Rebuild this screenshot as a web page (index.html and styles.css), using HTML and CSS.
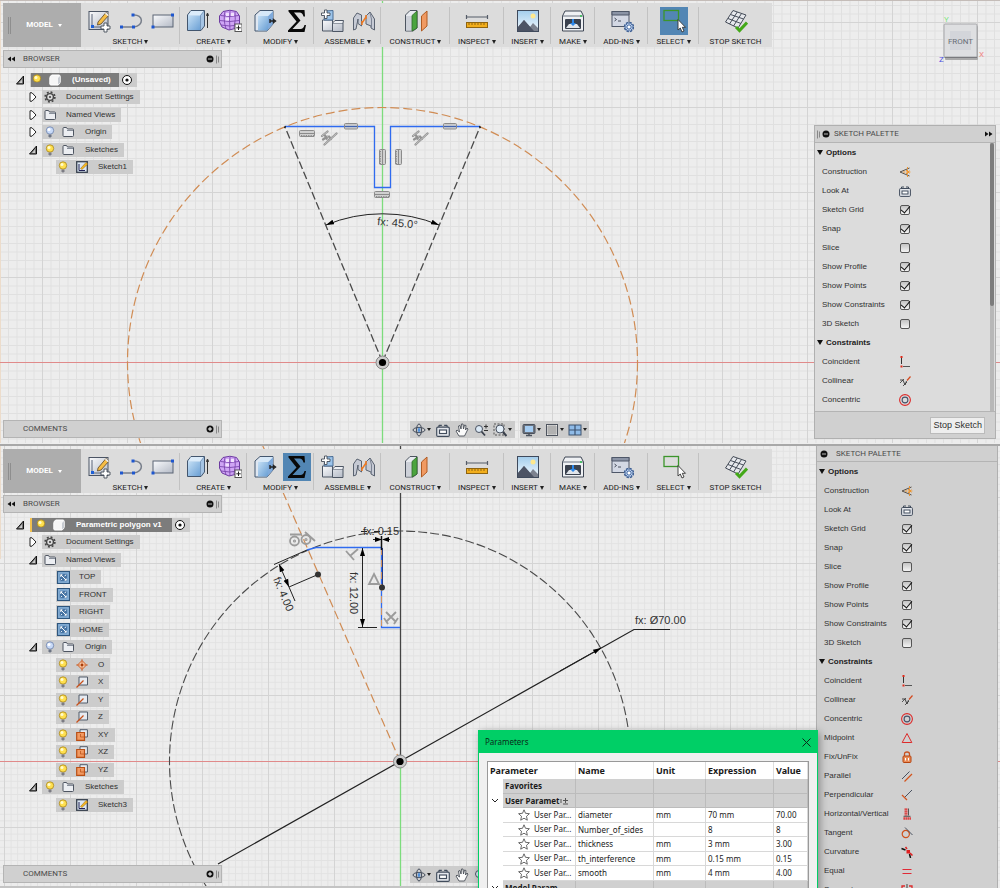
FILE: index.html
```html
<!DOCTYPE html>
<html lang="en">
<head>
<meta charset="utf-8">
<title>Sketch workspace</title>
<link rel="stylesheet" href="styles.css">
</head>
<body>
<svg class="sprite" width="0" height="0" aria-hidden="true">
  <defs>
    <linearGradient id="steel" x1="0" y1="0" x2="1" y2="1"><stop offset="0" stop-color="#fafbfd"/><stop offset="1" stop-color="#b4bac6"/></linearGradient>
    <linearGradient id="blue" x1="0" y1="0" x2="1" y2="1"><stop offset="0" stop-color="#c4dff5"/><stop offset="1" stop-color="#6a9fd4"/></linearGradient>
    <linearGradient id="sky" x1="0" y1="0" x2="0" y2="1"><stop offset="0" stop-color="#a3cdec"/><stop offset="1" stop-color="#f4faff"/></linearGradient>
    <pattern id="minor1" x="382" y="362" width="8.5" height="8.5" patternUnits="userSpaceOnUse"><path d="M0 .5H8.5M.5 0V8.5" stroke="#e0e0e0" fill="none"/></pattern>
    <pattern id="major1" x="382" y="362" width="85" height="85" patternUnits="userSpaceOnUse"><path d="M0 .5H85M.5 0V85" stroke="#d4d4d4" fill="none"/></pattern>
    <pattern id="minor2" x="400" y="317" width="6.6" height="6.6" patternUnits="userSpaceOnUse"><path d="M0 .5H6.6M.5 0V6.6" stroke="#e2e2e2" fill="none"/></pattern>
    <pattern id="major2" x="400" y="317" width="66" height="66" patternUnits="userSpaceOnUse"><path d="M0 .5H66M.5 0V66" stroke="#d4d4d4" fill="none"/></pattern>
    <marker id="arrow" viewBox="0 0 8 6" refX="8" refY="3" markerWidth="8" markerHeight="6" markerUnits="userSpaceOnUse" orient="auto-start-reverse"><path d="M0 .5L8 3L0 5.500z"/></marker>
  </defs>
  <symbol id="sketch" viewBox="0 0 24 24"><rect x="2" y="2.500" width="19" height="18" fill="url(#steel)" stroke="#4b5464"/><path d="M5 5V18H18" fill="none" stroke="#5a6478"/><rect x="4" y="16" width="3" height="3" fill="#1d5fd6"/><path d="M11 13L19 3.500L22 6L14 15L10.500 16z" fill="#f6bd45" stroke="#5b4422" stroke-width=".8"/><path d="M19 3.500L22 6L21 7.200L18 4.700z" fill="#e8eaf0"/><path d="M17 14h3v3h3v3h-3v3h-3v-3h-3v-3h3z" fill="#fff" stroke="#444c58" stroke-width=".9"/></symbol>
  <symbol id="curve" viewBox="0 0 24 24"><path d="M3 18H14M14 6C25 5 25 17 15 18" fill="none" stroke="#777e8a" stroke-width="1.500"/><g fill="#1e57cf"><rect x="1" y="16.500" width="3" height="3"/><rect x="13" y="16.500" width="3" height="3"/><rect x="12.500" y="4.500" width="3" height="3"/></g></symbol>
  <symbol id="rect" viewBox="0 0 24 24"><rect x="2" y="6" width="20" height="12" fill="url(#steel)" stroke="#5b6474"/><g fill="#1e57cf"><rect x=".5" y="16.500" width="3" height="3"/><rect x="20" y="4.500" width="3" height="3"/></g></symbol>
  <symbol id="extrude" viewBox="0 0 24 24"><path d="M1.500 6L5 1.500H18.500V17L15 21.500H1.500z" fill="#a5c4e4" stroke="#43566e"/><path d="M2 6.500H14.500V21H2z" fill="url(#blue)"/><path d="M2 6.500H14.500L18 2H5z" fill="#dcecfa"/><path d="M14.500 6.500V21M14.500 6.500L18 2" stroke="#6d8db0" stroke-width=".8"/><path d="M21.500 19V5M20.500 6.500L21.500 4L22.500 6.500z" stroke="#333" fill="#333"/></symbol>
  <symbol id="form" viewBox="0 0 24 24"><path d="M5 2.500Q12 0 18.500 2.500L21.500 7V15L19 19L11 21L4 18L1.500 13V7z" fill="#cfa5f5" stroke="#6c39a0"/><path d="M7 2.500Q5 10 8 20M12 2Q11 10 12 21M17 3Q18 10 16 19M2.500 6.500Q12 8.500 21 6.500M1.500 11.500Q12 13.500 21.500 11.500M3 16Q12 18 20 16" fill="none" stroke="#7a46ae" stroke-width=".9"/><path d="M8 4H11V7H8zM13 4H16V7H13zM7.500 8.500H11V11.500H7.500z" fill="#f0e0fd"/><rect x="17" y="15" width="7" height="7.500" fill="#fff" stroke="#555"/><path d="M20.500 16.500V21M18.300 18.800H22.700" stroke="#222"/></symbol>
  <symbol id="presspull" viewBox="0 0 24 24"><path d="M2 6L7 1.500H20V15L14 22H2z" fill="#dfe7f1" stroke="#43566e"/><path d="M5 7H15V21.500H5z" fill="url(#blue)"/><path d="M15 7L20 2V15L15 20.500z" fill="#7faadb"/><path d="M5 7L9 2H20L15 7z" fill="#d6e8f8"/><path d="M17 10V14M17 12H20M20.500 10.500L22.500 12L20.500 13.500z" stroke="#222" fill="#222" stroke-width="1.400"/></symbol>
  <symbol id="sigma" viewBox="0 0 24 24"><path d="M3.500 1H19.500L20 7.500H18.500Q17.500 3.500 14.500 3.500H9L15.500 11.500L7.500 20H15.500Q18.500 20 19.500 16H21L19.500 23H3V21.500L11.500 12.500L3.500 2.500z" fill="#080808"/></symbol>
  <symbol id="component" viewBox="0 0 24 24"><path d="M2.500 11V22H12.500V11zM12.500 14H23V22.500H12.500z" fill="url(#steel)" stroke="#4d5664"/><path d="M5 2L13 1.500V11H4z" fill="#9cc4ea" stroke="#4a6d94"/><path d="M12.500 14L15 11.500H23.500L23 14" fill="#eef0f4" stroke="#4d5664"/><path d="M4.500 1h2.500v3h3v2.500h-3v3h-2.500v-3h-3v-2.500h3z" fill="#fff" stroke="#444c58" stroke-width=".9"/></symbol>
  <symbol id="joint" viewBox="0 0 24 24"><path d="M1.500 9L5 4L9.500 6V17L6 14.500V10L4 20L1.500 21z" fill="#c6cad4" stroke="#596270"/><path d="M14 7L18 3L22.500 10V21L19 19V17L14 15z" fill="#c6cad4" stroke="#596270"/><path d="M18 4L19.500 10V19" fill="none" stroke="#7c8494"/><path d="M10 14L14 8M10 12V16M14 6V10" stroke="#ef7a22" stroke-width="1.500"/></symbol>
  <symbol id="construct" viewBox="0 0 24 24"><path d="M1.500 6L6 1.500H13V19L9 22H1.500z" fill="#e7eaef" stroke="#4d5560"/><path d="M2 7H8V21.500H2z" fill="#cdd1d9"/><path d="M8 6.500L13 2V19L8 22z" fill="#4ba43e" stroke="#2e6b28" stroke-width=".8"/><path d="M17.500 7L23 2V17L17.500 22z" fill="#f09a62" stroke="#b05b22"/></symbol>
  <symbol id="ruler" viewBox="0 0 24 24"><path d="M1.500 8H22.500M1.500 6V10M22.500 6V10" stroke="#555c68" stroke-width="1.200"/><rect x="1.500" y="13.500" width="21" height="5" fill="#f2ae1c" stroke="#8f6410"/><path d="M4 14V16M7 14V16M10 14V16M13 14V16M16 14V16M19 14V16" stroke="#8f6410"/></symbol>
  <symbol id="picture" viewBox="0 0 24 24"><rect x="1.500" y="1.500" width="21" height="21" fill="url(#sky)" stroke="#3f4a5c"/><circle cx="17" cy="7" r="2.500" fill="#ffe98e"/><path d="M2 18L8 11L14 18L17 14L22 19V22H2z" fill="#7c828f"/><path d="M2 18L8 11L18 22H2z" fill="#4c5364"/></symbol>
  <symbol id="printer" viewBox="0 0 24 24"><path d="M1.500 7L4 2H20L22.500 7V22H1.500z" fill="#eff1f4" stroke="#3e4654"/><path d="M1.500 7H22.500" stroke="#6c7482"/><rect x="4" y="10" width="16" height="10" rx="1" fill="#3b424f"/><path d="M5 19L8 15H16L19 19z" fill="#e1e5ea"/><path d="M11 10H13V14H15L12 17L9 14H11z" fill="#2d87e8"/><circle cx="20" cy="7" r="1" fill="#2fc04d"/></symbol>
  <symbol id="addins" viewBox="0 0 24 24"><rect x="2" y="2.500" width="17" height="15" fill="#d3d8e4" stroke="#4e5768"/><path d="M2 2.500H19V6H2z" fill="#8b94a6" stroke="#4e5768"/><path d="M4.500 9L6.500 10.500L4.500 12M8 12H11" fill="none" stroke="#39414f" stroke-width=".9"/><circle cx="19" cy="18" r="4.500" fill="#b8cdee" stroke="#3e5f92" stroke-width="1.500" stroke-dasharray="2.500 1"/><path d="M19 14V22M15 18H23M16 15L22 21M22 15L16 21" stroke="#3e5f92" stroke-width=".8"/><circle cx="19" cy="18" r="1.300" fill="#fff"/></symbol>
  <symbol id="select" viewBox="0 0 28 28"><rect x="4" y="3.500" width="14.500" height="10" fill="none" stroke="#3c952c" stroke-width="1.300"/><path d="M18 12.500V23L20.300 21L22 25L24 24L22.300 20.300H25.500z" fill="#fff" stroke="#333" stroke-width=".9"/></symbol>
  <symbol id="stop" viewBox="0 0 24 24"><path d="M9 1.500L22 6L14 19L1.500 13z" fill="#e6e8ec" stroke="#454c58"/><path d="M6.500 5.500L19.500 10M4 9.500L17 14.500M13.300 3L5.500 15M17.500 4.500L9.500 17" fill="none" stroke="#454c58" stroke-width="1"/><path d="M12 18L15.500 21.500L23 13.500" fill="none" stroke="#43a818" stroke-width="3"/></symbol>

  <symbol id="bulb" viewBox="0 0 12 12"><circle cx="6" cy="4.500" r="3.700" fill="#ffe04f" stroke="#a88418" stroke-width=".8"/><circle cx="5" cy="3.500" r="1.500" fill="#fffbd0"/><path d="M4.500 8.500H7.500V10.500L6.500 11.500H5.500L4.500 10.500z" fill="#7c7c84"/></symbol>
  <symbol id="bulb-off" viewBox="0 0 12 12"><circle cx="6" cy="4.500" r="3.700" fill="#c8daf8" stroke="#6a7fa8" stroke-width=".8"/><circle cx="5" cy="3.500" r="1.500" fill="#fff"/><path d="M4.500 8.500H7.500V10.500L6.500 11.500H5.500L4.500 10.500z" fill="#6c7484"/></symbol>
  <symbol id="folder" viewBox="0 0 12 12"><path d="M1 2.500Q1 1.500 2 1.500H4.500L5.500 3H10.500Q11.500 3 11.500 4V9.500Q11.500 10.500 10.500 10.500H2Q1 10.500 1 9.500z" fill="#eceef2" stroke="#4e5561"/><path d="M5 4.500H11" stroke="#6e7683" stroke-width=".8"/></symbol>
  <symbol id="gear" viewBox="0 0 12 12"><circle cx="6" cy="6" r="4.900" fill="none" stroke="#444" stroke-width="1.600" stroke-dasharray="1.900 1.950"/><circle cx="6" cy="6" r="3.400" fill="#ddd" stroke="#444" stroke-width="1.400"/><circle cx="6" cy="6" r="1.100" fill="#444"/></symbol>
  <symbol id="body" viewBox="0 0 12 12"><path d="M.8 4Q1 1.500 3 1H10Q11.200 1 11.200 2.500V8Q11 10 9 11H2Q.8 11 .8 10z" fill="#f6f6f6" stroke="#fff"/><path d="M9 4L11 2V8.500L9 10.500z" fill="#c8ccd2"/></symbol>
  <symbol id="sk" viewBox="0 0 12 12"><rect x=".7" y=".7" width="10.600" height="10.600" fill="#dbe6f3" stroke="#39424f" stroke-width="1.300"/><path d="M3 3V9.500H9" fill="none" stroke="#225" stroke-width="1"/><path d="M4.500 7.500L10 1.500L11.800 3L6 8.500z" fill="#f8b822" stroke="#8d6210" stroke-width=".5"/></symbol>
  <symbol id="view" viewBox="0 0 12 12"><rect x=".5" y=".5" width="11" height="11" fill="#8ab3da" stroke="#2e567e"/><rect x="2.500" y="2.500" width="7" height="7" fill="#4573a3"/><path d="M3.500 3.500L8.500 8.500M3.500 3.500V5.500M3.500 3.500H5M8.500 8.500H7M8.500 8.500V7M7 4.500L8.500 3.500M4.500 7.500L3.500 8.500" stroke="#fff" fill="none" stroke-width=".9"/></symbol>
  <symbol id="point" viewBox="0 0 12 12"><path d="M6 1.500L10.500 6L6 10.500L1.500 6z" fill="#f6c7a5" stroke="#c8571c" stroke-width=".9"/><path d="M6 0V12M0 6H12" stroke="#c8571c" stroke-width=".7"/><circle cx="6" cy="6" r="1.200" fill="#a53c08"/></symbol>
  <symbol id="axis" viewBox="0 0 12 12"><path d="M3 1H11.500V9H3z" fill="#e6eaf0" stroke="#525c6a"/><path d="M.5 11.500L7.500 4.500" stroke="#c8501a" stroke-width="1.300"/></symbol>
  <symbol id="plane" viewBox="0 0 12 12"><path d="M4 .7H11.400V8H4z" fill="#e6eaf0" stroke="#525c6a"/><path d="M.7 3.500H8.500V11.300H.7z" fill="#f29a62" stroke="#b94e14" stroke-width="1.200"/><path d="M4.500 5V8H8" stroke="#b94e14" fill="none" stroke-width=".7"/></symbol>
  <symbol id="shut" viewBox="0 0 8 10"><path d="M1 .8H3L7 5L3 9.200H1z" fill="#fff" stroke="#222"/></symbol>
  <symbol id="open" viewBox="0 0 8 10"><path d="M7.500 1V9H.5z" fill="#777" stroke="#111"/><path d="M6 4.500V8H3z" fill="#ccc"/></symbol>
  <symbol id="target" viewBox="0 0 12 12"><circle cx="6" cy="6" r="4.500" fill="#fff" stroke="#111"/><circle cx="6" cy="6" r="1.600" fill="#111"/></symbol>
  <symbol id="minus" viewBox="0 0 8 8"><circle cx="4" cy="4" r="3.500" fill="#111"/><path d="M2 4H6" stroke="#bbb"/></symbol>
  <symbol id="plus" viewBox="0 0 8 8"><circle cx="4" cy="4" r="3.500" fill="#111"/><path d="M2 4H6M4 2V6" stroke="#fff"/></symbol>
  <symbol id="back" viewBox="0 0 8 6"><path d="M4 .5V5.500L.5 3zM8 .5V5.500L4.500 3z" fill="#111"/></symbol>
  <symbol id="fwd" viewBox="0 0 8 6"><path d="M0 .5V5.500L3.500 3zM4 .5V5.500L7.500 3z" fill="#111"/></symbol>
  <symbol id="grip" viewBox="0 0 4 8"><path d="M.5 0V8M2.500 1V7" stroke="#888"/></symbol>

  <symbol id="c-constr" viewBox="0 0 12 12"><path d="M10.500 2L1 6L10.500 10" fill="none" stroke="#5a5148" stroke-width="1"/><path d="M4 6H12M8.500 1V11M7 4L11 8M7 8L11 4" stroke="#f09020" stroke-width=".9" stroke-dasharray="2 .7"/></symbol>
  <symbol id="c-look" viewBox="0 0 12 12"><rect x=".6" y="3.500" width="10.800" height="7.900" rx="1" fill="#e4e7ec" stroke="#414c5c"/><rect x="3" y="6" width="6" height="3" fill="#fff" stroke="#414c5c"/><path d="M2.500 3.500V2M9.500 3.500V2M2.500 2H5M7 2H9.500" stroke="#414c5c"/></symbol>
  <symbol id="c-coin" viewBox="0 0 12 12"><path d="M2.500 2V8" stroke="#333"/><path d="M4 10.500H11" stroke="#555"/><path d="M1.500 0H3.500V2H1.500zM1.500 9.500H3.500V11.500H1.500z" fill="#e02818"/></symbol>
  <symbol id="c-coll" viewBox="0 0 12 12"><path d="M1 5H4L6 10L7.500 6" fill="none" stroke="#222" stroke-width=".8"/><path d="M1 8L5 4M4 11L8 7" stroke="#333" stroke-width=".8"/><path d="M8 5.500L11.500 1.500" stroke="#d4481c" stroke-width="1.200"/></symbol>
  <symbol id="c-conc" viewBox="0 0 12 12"><circle cx="6" cy="6" r="5.400" fill="none" stroke="#dd2a2a" stroke-width="1.100"/><circle cx="6" cy="6" r="2.900" fill="none" stroke="#46536a" stroke-width="1.100"/></symbol>
  <symbol id="c-mid" viewBox="0 0 12 12"><path d="M6 1.500L10.800 10.500H1.200z" fill="none" stroke="#dd2a2a"/></symbol>
  <symbol id="c-fix" viewBox="0 0 12 12"><path d="M3.500 5.500V3Q3.500 1 6 1T8.500 3V5.500" fill="none" stroke="#c8501e" stroke-width="1.300"/><rect x="2" y="5" width="8" height="6.500" rx="1" fill="#e98c58" stroke="#b5430f"/><path d="M4.500 7V9.500M7.500 7V9.500" stroke="#fff"/></symbol>
  <symbol id="c-par" viewBox="0 0 12 12"><path d="M1 9L8.500 1.500" stroke="#4a5260"/><path d="M3.500 11.500L11 4" stroke="#d4541c" stroke-width="1.200"/></symbol>
  <symbol id="c-perp" viewBox="0 0 12 12"><path d="M3.500 8.500L11 1" stroke="#4a5260"/><path d="M1 6L6 11" stroke="#d4541c" stroke-width="1.200"/></symbol>
  <symbol id="c-hv" viewBox="0 0 12 12"><path d="M5 .5V7.500" stroke="#e02020" stroke-width="3" stroke-dasharray="1.300 .7"/><path d="M7.500 .5V7.500M2.500 8.300H9.500" stroke="#555"/><path d="M2.500 10.500H10" stroke="#e02020" stroke-width="2.500" stroke-dasharray="1.300 .7"/></symbol>
  <symbol id="c-tan" viewBox="0 0 12 12"><circle cx="4.800" cy="7" r="3.600" fill="none" stroke="#cf521c" stroke-width="1.200"/><path d="M4 .5L11.500 8" stroke="#4a5260"/></symbol>
  <symbol id="c-curv" viewBox="0 0 12 12"><path d="M.5 2.500L4.500 4M8.500 8L9.500 12" stroke="#111" stroke-width="1.500"/><path d="M4.500 1L6 3M9 7L11.500 9.500" stroke="#e02020" stroke-width="1.500"/><rect x="5.500" y="4" width="3.500" height="3.500" fill="#e02020"/></symbol>
  <symbol id="c-eq" viewBox="0 0 12 12"><path d="M1.500 4.500H10.500M1.500 8.500H10.500" stroke="#e02a36"/></symbol>
  <symbol id="c-sym" viewBox="0 0 12 12"><path d="M6 0V12" stroke="#444"/><path d="M4 2H1V8H4M8 2H11V8H8" fill="none" stroke="#dd2a2a" stroke-width="1.300"/></symbol>

  <symbol id="n-orbit" viewBox="0 0 14 14"><ellipse cx="7" cy="7" rx="6" ry="2.500" fill="none" stroke="#424b5a"/><ellipse cx="7" cy="7" rx="2.500" ry="6" fill="none" stroke="#424b5a"/><path d="M7 4L8.500 7L7 10L5.500 7z" fill="#4f90dc"/></symbol>
  <symbol id="n-pan" viewBox="0 0 14 14"><path d="M4 13L1 8L2 7L4.500 9L3.500 3L5 2.500L6 6L6.500 1L8 1L8.500 6L9.500 2L11 2.500L10.500 7L12 5L13 6L11 10L9.500 13z" fill="#fbfbfb" stroke="#4a4f58" stroke-width=".9"/></symbol>
  <symbol id="n-zoom" viewBox="0 0 14 14"><circle cx="5" cy="6" r="3.500" fill="#dbe9f6" stroke="#4a5260"/><path d="M7.500 8.500L11 12.500" stroke="#3a404c" stroke-width="1.800"/><path d="M12 1.500V5.500M10 3.500H14M10 7.500H14" stroke="#333"/></symbol>
  <symbol id="n-fit" viewBox="0 0 14 14"><rect x="1" y="1" width="10" height="11" fill="none" stroke="#555" stroke-dasharray="2 1.500"/><circle cx="7" cy="6" r="4" fill="#e3eef8" stroke="#4a5260"/><path d="M10 9L13.500 13" stroke="#3a404c" stroke-width="2"/></symbol>
  <symbol id="n-disp" viewBox="0 0 14 14"><rect x="1" y="1.500" width="12" height="9" rx="1" fill="#6d747f" stroke="#4a515d"/><rect x="3" y="3" width="8" height="6" fill="#a4ccf2"/><path d="M4 12.500H10M7 10V12" stroke="#4a515d" stroke-width="1.500"/></symbol>
  <symbol id="n-grid" viewBox="0 0 14 14"><rect x="1.500" y="1.500" width="11" height="11" fill="#ececec" stroke="#4e545e"/><path d="M4 2V12M6 2V12M8 2V12M10 2V12M2 4H12M2 6H12M2 8H12M2 10H12" stroke="#888" stroke-width=".7"/></symbol>
  <symbol id="n-views" viewBox="0 0 14 14"><rect x="1" y="2" width="12" height="10" fill="#8fbbe8" stroke="#3d526e"/><path d="M7 2V12M1 7H13" stroke="#3d526e" stroke-width="1.200"/></symbol>

  <symbol id="g-bar" viewBox="0 0 14 7"><rect x=".5" y=".5" width="13" height="5.500" rx="1" fill="#bbb" fill-opacity=".6" stroke="#8b8b8b"/><path d="M1 3.500H13" stroke="#3f62b0"/></symbol>
  <symbol id="g-comb" viewBox="0 0 16 8"><rect x=".5" y=".5" width="15" height="6" rx="1" fill="#d0d0d0" stroke="#8b8b8b"/><path d="M1 3.500H15" stroke="#8b8b8b"/><path d="M2 6H15" stroke="#8b8b8b" stroke-width="2" stroke-dasharray="1.200 1.200"/></symbol>
  <symbol id="g-coll" viewBox="0 0 18 16"><g fill="none" stroke="#929292" stroke-width="2.200" stroke-linecap="round"><path d="M2 6L7.500 1.500M4 4.500L7 8M4.500 14.500L16.500 3.500M3 9.500L6 7.500M9 6.500L11 9"/><circle cx="7.500" cy="8" r="2" stroke-width="1"/></g><path d="M4.500 14.500L16.500 3.500M2 6L7.500 1.500" stroke="#ccc" stroke-width=".8"/></symbol>
</svg>

<main class="screens">
<section class="viewport first" aria-label="Unsaved design">
  <svg class="canvas" role="img" aria-label="Notched segment sketch">
    <rect width="100%" height="100%" fill="url(#minor1)"/><rect width="100%" height="100%" fill="url(#major1)"/>
    <path d="M.5 0V600" stroke="#ecdccb"/>
    <path d="M0 362.500H3000" stroke="#e08a8a"/><path d="M382.500 0V2000" stroke="#7ddc7d" stroke-width="1.300"/>
    <circle cx="382.500" cy="362.500" r="255" fill="none" stroke="#d08c54" stroke-width="1.200" stroke-dasharray="9 4"/>
    <path d="M382.500 362L285 127M382.500 362L480 127" stroke="#4a4a4a" stroke-width="1.300" stroke-dasharray="8 3"/>
    <path d="M285 126.500H374.500V187.500H390.500V126.500H480" fill="none" stroke="#2f6bf0" stroke-width="1.300"/>
    <path d="M284.500 128L285.500 126M479.500 126L480.500 128" stroke="#222" stroke-width="1.500"/>
    <path d="M326 225A148 148 0 0 1 439 225" fill="none" stroke="#222" marker-start="url(#arrow)" marker-end="url(#arrow)"/>
    <text class="dim" transform="translate(377 225) rotate(5)">fx: 45.0°</text>
    <circle cx="382.500" cy="362.500" r="6.500" fill="#ccc" stroke="#888"/><circle cx="382.500" cy="362.500" r="3.600"/>
    <use href="#g-bar" x="344" y="123" width="14" height="7"/><use href="#g-bar" x="443" y="123" width="14" height="7"/>
    <use href="#g-comb" x="299" y="130" width="16" height="8"/><use href="#g-comb" x="374" y="191" width="16" height="8"/>
    <use href="#g-comb" transform="translate(386 149) rotate(90)" width="16" height="8"/><use href="#g-comb" transform="translate(402 149) rotate(90)" width="16" height="8"/>
    <use href="#g-coll" x="320" y="130" width="18" height="16"/><use href="#g-coll" x="411" y="130" width="18" height="16"/>
  </svg>
  <div class="work">
    <nav class="toolbar" aria-label="Tools">
      <button class="mode">MODEL</button>
      <div class="group w-sketch"><div class="icons"><button aria-label="Create sketch"><svg><use href="#sketch"/></svg></button><button aria-label="Line"><svg><use href="#curve"/></svg></button><button aria-label="Rectangle"><svg><use href="#rect"/></svg></button></div><button class="menu">SKETCH</button></div>
      <div class="group w-pair"><div class="icons"><button aria-label="Extrude"><svg><use href="#extrude"/></svg></button><button aria-label="Form"><svg><use href="#form"/></svg></button></div><button class="menu">CREATE</button></div>
      <div class="group w-pair"><div class="icons"><button aria-label="Press pull"><svg><use href="#presspull"/></svg></button><button aria-label="Change parameters"><svg><use href="#sigma"/></svg></button></div><button class="menu">MODIFY</button></div>
      <div class="group w-pair"><div class="icons"><button aria-label="New component"><svg><use href="#component"/></svg></button><button aria-label="Joint"><svg><use href="#joint"/></svg></button></div><button class="menu">ASSEMBLE</button></div>
      <div class="group w-construct"><div class="icons"><button aria-label="Offset plane"><svg><use href="#construct"/></svg></button></div><button class="menu">CONSTRUCT</button></div>
      <div class="group w-inspect"><div class="icons"><button aria-label="Measure"><svg><use href="#ruler"/></svg></button></div><button class="menu">INSPECT</button></div>
      <div class="group w-insert"><div class="icons"><button aria-label="Insert image"><svg><use href="#picture"/></svg></button></div><button class="menu">INSERT</button></div>
      <div class="group w-make"><div class="icons"><button aria-label="3D print"><svg><use href="#printer"/></svg></button></div><button class="menu">MAKE</button></div>
      <div class="group w-addins"><div class="icons"><button aria-label="Scripts"><svg><use href="#addins"/></svg></button></div><button class="menu">ADD-INS</button></div>
      <div class="group w-select"><div class="icons"><button class="on full" aria-label="Select"><svg><use href="#select"/></svg></button></div><button class="menu">SELECT</button></div>
      <div class="group w-stop"><div class="icons"><button aria-label="Finish"><svg><use href="#stop"/></svg></button></div><button class="menu plain">STOP SKETCH</button></div>
    </nav>
    <header class="bar"><svg class="s8"><use href="#back"/></svg><h2>BROWSER</h2><svg class="s8"><use href="#minus"/></svg><svg class="grip"><use href="#grip"/></svg></header>
    <ul class="tree">
      <li class="l0"><svg class="tw"><use href="#open"/></svg><span class="root"><span class="dark"><svg><use href="#bulb"/></svg><svg><use href="#body"/></svg><b>(Unsaved)</b></span><svg><use href="#target"/></svg></span></li>
      <li class="l1"><svg class="tw"><use href="#shut"/></svg><span class="pill"><svg><use href="#gear"/></svg>Document Settings</span></li>
      <li class="l1"><svg class="tw"><use href="#shut"/></svg><span class="pill"><svg><use href="#folder"/></svg>Named Views</span></li>
      <li class="l1"><svg class="tw"><use href="#shut"/></svg><span class="pill"><svg><use href="#bulb-off"/></svg><svg><use href="#folder"/></svg>Origin</span></li>
      <li class="l1"><svg class="tw"><use href="#open"/></svg><span class="pill"><svg><use href="#bulb"/></svg><svg><use href="#folder"/></svg>Sketches</span></li>
      <li class="l2"><span class="pill"><svg><use href="#bulb"/></svg><svg><use href="#sk"/></svg>Sketch1</span></li>
    </ul>
    <footer class="foot">
      <div class="bar comments"><h2>COMMENTS</h2><svg class="s8"><use href="#plus"/></svg><svg class="grip"><use href="#grip"/></svg></div>
      <div class="navs">
        <div class="nav"><button class="drop" aria-label="Orbit"><svg><use href="#n-orbit"/></svg></button><button aria-label="Look at"><svg><use href="#c-look"/></svg></button><button aria-label="Pan"><svg><use href="#n-pan"/></svg></button><button aria-label="Zoom"><svg><use href="#n-zoom"/></svg></button><button class="drop" aria-label="Fit"><svg><use href="#n-fit"/></svg></button></div>
        <div class="nav tight"><button class="drop" aria-label="Display"><svg><use href="#n-disp"/></svg></button><button class="drop" aria-label="Grid"><svg><use href="#n-grid"/></svg></button><button class="drop" aria-label="Viewports"><svg><use href="#n-views"/></svg></button></div>
      </div>
    </footer>
  </div>
  <aside class="side">
    <div class="cube-area"><svg class="cube" width="48" height="54" role="img" aria-label="View cube"><rect x="8" y="12" width="33" height="34" rx="1" fill="#aaa"/><rect x="7" y="10" width="33" height="33" rx="1" fill="#dedfe1" stroke="#a5a6a9"/><rect x="13" y="17" width="21" height="19" fill="#d3d5da"/><path d="M7.500 43.500H40" stroke="#7a7a7e"/><text x="23.500" y="29.500" text-anchor="middle" class="face">FRONT</text><text x="7" y="8" class="ax" fill="#84e484">Y</text><text x="42" y="43" class="ax" fill="#f08484">X</text><text x="2" y="48" class="ax" fill="#4a4ae0">Z</text></svg></div>
    <div class="palette">
      <header class="phead"><svg class="grip"><use href="#grip"/></svg><svg class="s8"><use href="#minus"/></svg><h2>SKETCH PALETTE</h2><svg class="s8"><use href="#fwd"/></svg></header>
      <div class="pbody">
        <h3>Options</h3>
        <div class="row"><label for="a1">Construction</label><button id="a1"><svg><use href="#c-constr"/></svg></button></div>
        <div class="row"><label for="a2">Look At</label><button id="a2"><svg><use href="#c-look"/></svg></button></div>
        <div class="row"><label for="a3">Sketch Grid</label><input type="checkbox" id="a3" checked></div>
        <div class="row"><label for="a4">Snap</label><input type="checkbox" id="a4" checked></div>
        <div class="row"><label for="a5">Slice</label><input type="checkbox" id="a5"></div>
        <div class="row"><label for="a6">Show Profile</label><input type="checkbox" id="a6" checked></div>
        <div class="row"><label for="a7">Show Points</label><input type="checkbox" id="a7" checked></div>
        <div class="row"><label for="a8">Show Constraints</label><input type="checkbox" id="a8" checked></div>
        <div class="row"><label for="a9">3D Sketch</label><input type="checkbox" id="a9"></div>
        <h3>Constraints</h3>
        <div class="row"><label for="a10">Coincident</label><button id="a10"><svg><use href="#c-coin"/></svg></button></div>
        <div class="row"><label for="a11">Collinear</label><button id="a11"><svg><use href="#c-coll"/></svg></button></div>
        <div class="row"><label for="a12">Concentric</label><button id="a12"><svg><use href="#c-conc"/></svg></button></div>
        <div class="scroll"><i></i></div>
      </div>
      <footer class="pfoot"><button class="finish">Stop Sketch</button></footer>
    </div>
  </aside>
</section>

<section class="viewport second" aria-label="Parametric polygon">
  <svg class="canvas" role="img" aria-label="Parametric polygon sketch">
    <rect width="100%" height="100%" fill="url(#minor2)"/><rect width="100%" height="100%" fill="url(#major2)"/>
    <path d="M.5 0V115" stroke="#ecdccb"/>
    <path d="M0 317.500H3000" stroke="#e08a8a"/><path d="M400.500 317V2000" stroke="#7ddc7d" stroke-width="1.300"/>
    <path d="M400.500 0V317" stroke="#444" stroke-width="1.300"/>
    <circle cx="400" cy="317.500" r="230.500" fill="none" stroke="#4a4a4a" stroke-width="1.100" stroke-dasharray="9 3"/>
    <path d="M262 0L400 317" stroke="#d08c54" stroke-width="1.200" stroke-dasharray="9 4"/>
    <path d="M218 420L634 185.500H670" fill="none" stroke="#222" stroke-width="1.200"/>
    <path d="M560 227L601 204" stroke="#222" marker-end="url(#arrow)"/>
    <text class="dim" x="635" y="180">fx: Ø70.00</text>
    <path d="M307 106L316 103.500H381.500V183.500H400" fill="none" stroke="#2f6bf0" stroke-width="1.300"/>
    <path d="M382.500 104V143" stroke="#223a88"/><path d="M381.500 104V182" stroke="#d3945f" stroke-dasharray="7 5"/>
    <path d="M362.500 104V183" stroke="#222" marker-start="url(#arrow)" marker-end="url(#arrow)"/><path d="M358 183.500H377M307 106L274 120.500M318 130.500L289 143M289 143L295 157M373 95.500H379M384 95.500H390M361 87.500H367M374 87.500H380" stroke="#222"/>
    <path d="M279 120L289 143" stroke="#222" marker-start="url(#arrow)" marker-end="url(#arrow)"/>
    <path d="M381.500 92V106" stroke="#111" stroke-width="1.500"/><path d="M375 93L382 95.500L375 98zM389 93L382 95.500L389 98z"/>
    <text class="dim" x="363" y="91">fx: 0.15</text>
    <text class="dim" transform="translate(350 128) rotate(90)">fx: 12.00</text>
    <text class="dim" transform="translate(273 135) rotate(67)">fx: 4.00</text>
    <circle cx="318" cy="130.500" r="3" fill="#333"/><circle cx="382" cy="143.500" r="3" fill="#333"/>
    <g fill="none" stroke="#9b9b9b" stroke-width="1.800"><circle cx="294.500" cy="97" r="4.500"/><circle cx="294.500" cy="97" r="1" stroke-width="1.200"/><circle cx="306" cy="95.500" r="4.500"/><circle cx="306" cy="95.500" r="1" stroke-width="1.200"/><path d="M290 90.500H302M305 88L315 97M346 107L354 116M350 112L358 105"/><path d="M374 130L379 140H369z" stroke-width="1.800"/><path d="M386 168L396 178M396 168L386 178M384 174L388 180M398 174L394 180"/></g>
    <circle cx="400" cy="317.500" r="6.500" fill="#ccc" stroke="#888"/><circle cx="400" cy="317.500" r="3.600"/>
  </svg>
  <div class="work">
    <nav class="toolbar" aria-label="Tools">
      <button class="mode">MODEL</button>
      <div class="group w-sketch"><div class="icons"><button aria-label="Create sketch"><svg><use href="#sketch"/></svg></button><button aria-label="Line"><svg><use href="#curve"/></svg></button><button aria-label="Rectangle"><svg><use href="#rect"/></svg></button></div><button class="menu">SKETCH</button></div>
      <div class="group w-pair"><div class="icons"><button aria-label="Extrude"><svg><use href="#extrude"/></svg></button><button aria-label="Form"><svg><use href="#form"/></svg></button></div><button class="menu">CREATE</button></div>
      <div class="group w-pair"><div class="icons"><button aria-label="Press pull"><svg><use href="#presspull"/></svg></button><button class="on" aria-label="Change parameters"><svg><use href="#sigma"/></svg></button></div><button class="menu">MODIFY</button></div>
      <div class="group w-pair"><div class="icons"><button aria-label="New component"><svg><use href="#component"/></svg></button><button aria-label="Joint"><svg><use href="#joint"/></svg></button></div><button class="menu">ASSEMBLE</button></div>
      <div class="group w-construct"><div class="icons"><button aria-label="Offset plane"><svg><use href="#construct"/></svg></button></div><button class="menu">CONSTRUCT</button></div>
      <div class="group w-inspect"><div class="icons"><button aria-label="Measure"><svg><use href="#ruler"/></svg></button></div><button class="menu">INSPECT</button></div>
      <div class="group w-insert"><div class="icons"><button aria-label="Insert image"><svg><use href="#picture"/></svg></button></div><button class="menu">INSERT</button></div>
      <div class="group w-make"><div class="icons"><button aria-label="3D print"><svg><use href="#printer"/></svg></button></div><button class="menu">MAKE</button></div>
      <div class="group w-addins"><div class="icons"><button aria-label="Scripts"><svg><use href="#addins"/></svg></button></div><button class="menu">ADD-INS</button></div>
      <div class="group w-select"><div class="icons"><button class="full" aria-label="Select"><svg><use href="#select"/></svg></button></div><button class="menu">SELECT</button></div>
      <div class="group w-stop"><div class="icons"><button aria-label="Finish"><svg><use href="#stop"/></svg></button></div><button class="menu plain">STOP SKETCH</button></div>
    </nav>
    <header class="bar"><svg class="s8"><use href="#back"/></svg><h2>BROWSER</h2><svg class="s8"><use href="#minus"/></svg><svg class="grip"><use href="#grip"/></svg></header>
    <ul class="tree">
      <li class="l0"><svg class="tw"><use href="#open"/></svg><span class="root edited"><span class="dark"><svg><use href="#bulb"/></svg><svg><use href="#body"/></svg><b>Parametric polygon v1</b></span><svg><use href="#target"/></svg></span></li>
      <li class="l1"><svg class="tw"><use href="#shut"/></svg><span class="pill"><svg><use href="#gear"/></svg>Document Settings</span></li>
      <li class="l1"><svg class="tw"><use href="#open"/></svg><span class="pill"><svg><use href="#folder"/></svg>Named Views</span></li>
      <li class="l2 v"><span class="pill"><svg><use href="#view"/></svg>TOP</span></li>
      <li class="l2 v"><span class="pill"><svg><use href="#view"/></svg>FRONT</span></li>
      <li class="l2 v"><span class="pill"><svg><use href="#view"/></svg>RIGHT</span></li>
      <li class="l2 v"><span class="pill"><svg><use href="#view"/></svg>HOME</span></li>
      <li class="l1"><svg class="tw"><use href="#open"/></svg><span class="pill"><svg><use href="#bulb-off"/></svg><svg><use href="#folder"/></svg>Origin</span></li>
      <li class="l2"><span class="pill"><svg><use href="#bulb"/></svg><svg><use href="#point"/></svg>O</span></li>
      <li class="l2"><span class="pill"><svg><use href="#bulb"/></svg><svg><use href="#axis"/></svg>X</span></li>
      <li class="l2"><span class="pill"><svg><use href="#bulb"/></svg><svg><use href="#axis"/></svg>Y</span></li>
      <li class="l2"><span class="pill"><svg><use href="#bulb"/></svg><svg><use href="#axis"/></svg>Z</span></li>
      <li class="l2"><span class="pill"><svg><use href="#bulb"/></svg><svg><use href="#plane"/></svg>XY</span></li>
      <li class="l2"><span class="pill"><svg><use href="#bulb"/></svg><svg><use href="#plane"/></svg>XZ</span></li>
      <li class="l2"><span class="pill"><svg><use href="#bulb"/></svg><svg><use href="#plane"/></svg>YZ</span></li>
      <li class="l1"><svg class="tw"><use href="#open"/></svg><span class="pill"><svg><use href="#bulb"/></svg><svg><use href="#folder"/></svg>Sketches</span></li>
      <li class="l2"><span class="pill"><svg><use href="#bulb"/></svg><svg><use href="#sk"/></svg>Sketch3</span></li>
    </ul>
    <footer class="foot">
      <div class="bar comments"><h2>COMMENTS</h2><svg class="s8"><use href="#plus"/></svg><svg class="grip"><use href="#grip"/></svg></div>
      <div class="navs">
        <div class="nav"><button class="drop" aria-label="Orbit"><svg><use href="#n-orbit"/></svg></button><button aria-label="Look at"><svg><use href="#c-look"/></svg></button><button aria-label="Pan"><svg><use href="#n-pan"/></svg></button><button aria-label="Zoom"><svg><use href="#n-zoom"/></svg></button></div>
      </div>
    </footer>
  </div>
  <aside class="side">
    <div class="palette">
      <header class="phead"><svg class="s8"><use href="#minus"/></svg><h2>SKETCH PALETTE</h2></header>
      <div class="pbody">
        <h3>Options</h3>
        <div class="row"><label for="b1">Construction</label><button id="b1"><svg><use href="#c-constr"/></svg></button></div>
        <div class="row"><label for="b2">Look At</label><button id="b2"><svg><use href="#c-look"/></svg></button></div>
        <div class="row"><label for="b3">Sketch Grid</label><input type="checkbox" id="b3" checked></div>
        <div class="row"><label for="b4">Snap</label><input type="checkbox" id="b4" checked></div>
        <div class="row"><label for="b5">Slice</label><input type="checkbox" id="b5"></div>
        <div class="row"><label for="b6">Show Profile</label><input type="checkbox" id="b6" checked></div>
        <div class="row"><label for="b7">Show Points</label><input type="checkbox" id="b7" checked></div>
        <div class="row"><label for="b8">Show Constraints</label><input type="checkbox" id="b8" checked></div>
        <div class="row"><label for="b9">3D Sketch</label><input type="checkbox" id="b9"></div>
        <h3>Constraints</h3>
        <div class="row"><label for="b10">Coincident</label><button id="b10"><svg><use href="#c-coin"/></svg></button></div>
        <div class="row"><label for="b11">Collinear</label><button id="b11"><svg><use href="#c-coll"/></svg></button></div>
        <div class="row"><label for="b12">Concentric</label><button id="b12"><svg><use href="#c-conc"/></svg></button></div>
        <div class="row"><label for="b13">Midpoint</label><button id="b13"><svg><use href="#c-mid"/></svg></button></div>
        <div class="row"><label for="b14">Fix/UnFix</label><button id="b14"><svg><use href="#c-fix"/></svg></button></div>
        <div class="row"><label for="b15">Parallel</label><button id="b15"><svg><use href="#c-par"/></svg></button></div>
        <div class="row"><label for="b16">Perpendicular</label><button id="b16"><svg><use href="#c-perp"/></svg></button></div>
        <div class="row"><label for="b17">Horizontal/Vertical</label><button id="b17"><svg><use href="#c-hv"/></svg></button></div>
        <div class="row"><label for="b18">Tangent</label><button id="b18"><svg><use href="#c-tan"/></svg></button></div>
        <div class="row"><label for="b19">Curvature</label><button id="b19"><svg><use href="#c-curv"/></svg></button></div>
        <div class="row"><label for="b20">Equal</label><button id="b20"><svg><use href="#c-eq"/></svg></button></div>
        <div class="row"><label for="b21">Symmetry</label><button id="b21"><svg><use href="#c-sym"/></svg></button></div>
      </div>
    </div>
  </aside>
  <div class="dialog" role="dialog" aria-label="Parameters">
    <header><h2>Parameters</h2><button aria-label="Close"><svg width="9" height="9"><path d="M.5 .5L8.500 8.500M8.500 .5L.5 8.500" stroke="#0a2a18"/></svg></button></header>
    <table>
      <colgroup><col class="k0"><col class="k1"><col class="k2"><col class="k3"><col class="k4"><col class="k5"></colgroup>
      <thead><tr><th colspan="2">Parameter</th><th>Name</th><th>Unit</th><th>Expression</th><th>Value</th></tr></thead>
      <tbody>
        <tr class="cat"><td></td><td>Favorites</td><td></td><td></td><td></td><td></td></tr>
        <tr class="cat"><td><svg class="chev"><path d="M1 2L4 5L7 2" fill="none" stroke="#222"/></svg></td><td>User Paramet<svg width="9" height="8"><path d="M1 2V6M3 3.500H8M5.500 1V6M3 7H8" stroke="#555"/></svg></td><td></td><td></td><td></td><td></td></tr>
        <tr><td></td><td class="p"><svg class="star"><path d="M6 .8L7.500 4.300L11.400 4.700L8.500 7.300L9.300 11.200L6 9.200L2.700 11.200L3.500 7.300L.6 4.700L4.500 4.300z"/></svg>User Par...</td><td>diameter</td><td>mm</td><td>70 mm</td><td>70.00</td></tr>
        <tr><td></td><td class="p"><svg class="star"><path d="M6 .8L7.500 4.300L11.400 4.700L8.500 7.300L9.300 11.200L6 9.200L2.700 11.200L3.500 7.300L.6 4.700L4.500 4.300z"/></svg>User Par...</td><td>Number_of_sides</td><td></td><td>8</td><td>8</td></tr>
        <tr><td></td><td class="p"><svg class="star"><path d="M6 .8L7.500 4.300L11.400 4.700L8.500 7.300L9.300 11.200L6 9.200L2.700 11.200L3.500 7.300L.6 4.700L4.500 4.300z"/></svg>User Par...</td><td>thickness</td><td>mm</td><td>3 mm</td><td>3.00</td></tr>
        <tr><td></td><td class="p"><svg class="star"><path d="M6 .8L7.500 4.300L11.400 4.700L8.500 7.300L9.300 11.200L6 9.200L2.700 11.200L3.500 7.300L.6 4.700L4.500 4.300z"/></svg>User Par...</td><td>th_interference</td><td>mm</td><td>0.15 mm</td><td>0.15</td></tr>
        <tr><td></td><td class="p"><svg class="star"><path d="M6 .8L7.500 4.300L11.400 4.700L8.500 7.300L9.300 11.200L6 9.200L2.700 11.200L3.500 7.300L.6 4.700L4.500 4.300z"/></svg>User Par...</td><td>smooth</td><td>mm</td><td>4 mm</td><td>4.00</td></tr>
        <tr class="cat"><td><svg class="chev"><path d="M1 2L4 5L7 2" fill="none" stroke="#222"/></svg></td><td>Model Param</td><td></td><td></td><td></td><td></td></tr>
      </tbody>
    </table>
  </div>
</section>
</main>
</body>
</html>
```
FILE: styles.css
```css
* { box-sizing: border-box; }
body { margin: 0; background: #ededed; font: 8px/12px "Liberation Sans", Arial, sans-serif; color: #303030; }
button { border: 0; padding: 0; background: none; font: inherit; color: inherit; }
h2, h3 { margin: 0; font: inherit; }
svg { display: block; flex: none; }
.sprite { position: absolute; }

.screens { display: grid; grid-template-rows: minmax(0, 1fr) minmax(0, 1fr); height: 100vh; }
.viewport { position: relative; display: flex; overflow: hidden; border-top: 1px solid #c4bcb8; background: #ededed; }
.viewport.second { border-top: 2px solid #a8a8a8; }
.canvas { position: absolute; inset: 0; width: 100%; height: 100%; margin-top: -1px; }
.second .canvas { margin-top: -2px; }
.dim { font: 11px "Liberation Sans", Arial, sans-serif; fill: #333; }

.work { position: relative; flex: 1; min-width: 0; display: flex; flex-direction: column; padding: 2px 0 6px 3px; }
.second .work { padding-bottom: 3px; border-bottom: 2px solid #c4c4c4; }

.toolbar { display: flex; width: max-content; height: 44px; background: #dcdcdc; font: 8px/12px Roboto, sans-serif; }
.second .toolbar { margin-top: 1px; }
.mode { display: flex; align-items: center; justify-content: center; gap: 5px; width: 78px; padding-left: 4px; background: linear-gradient(90deg, #8e8e8e 1px, transparent 1px 2px, #8e8e8e 2px) 5px center / 3px 17px no-repeat #adadad; color: #fff; font-weight: 700; }
.mode::after { content: ""; border: 2px solid transparent; border-top: 3px solid #fff; border-bottom: 0; }
.group { display: flex; flex-direction: column; align-items: center; padding-top: 4px; background: linear-gradient(#c2c2c2, #c2c2c2) right 4px / 1px 37px no-repeat; }
.group:last-child { background: none; }
.w-sketch { width: 99px; }
.w-pair { width: 67px; }
.w-construct { width: 69px; }
.w-inspect { width: 54px; }
.w-insert { width: 47px; }
.w-make { width: 44px; }
.w-addins { width: 53px; }
.w-select { width: 51px; }
.w-stop { width: 73px; }
.icons { display: flex; gap: 4px; }
.icons button { width: 28px; height: 28px; display: grid; place-items: center; }
.icons svg { width: 24px; height: 24px; }
.icons .full svg { width: 28px; height: 28px; }
.icons .on { background: #5286b4; }
.menu { display: flex; align-items: center; gap: 2px; margin-top: 1px; color: #222; white-space: nowrap; }
.menu::after { content: ""; border: 2px solid transparent; border-top: 4px solid #222; border-bottom: 0; }
.menu.plain::after { display: none; }

.bar { display: flex; align-items: center; width: 219px; height: 18px; margin-top: 3px; padding: 0 1px 0 3px; background: #d0d0d0; border: 1px solid #b4b4b4; font-family: Roboto, sans-serif; color: #4a4a4a; }
.second .bar { margin-top: 2px; }
.bar h2 { flex: 1; margin-left: 8px; }
.bar.comments h2 { margin-left: 16px; }
.foot .comments { margin-top: 0; }
.s8 { width: 8px; height: 8px; }
.grip { width: 4px; height: 9px; margin-left: 2px; }

.tree { list-style: none; margin: 0; padding: 3px 0 0; }
.tree li { display: flex; align-items: center; height: 17px; }
.tree li:nth-child(even) { height: 18px; }
.tw { width: 8px; height: 10px; }
.l0 { padding-left: 13px; }
.l1 { padding-left: 26px; }
.l2 { padding-left: 53px; }
.pill, .root, .dark { display: flex; align-items: center; height: 14px; }
.pill { margin-left: 5px; padding: 0 6px 0 2px; background: #cccccc; }
.l2 .pill { margin-left: 0; padding-left: 1px; }
.pill svg, .root svg { width: 12px; height: 12px; }
.pill svg { margin-right: 10px; }
.pill svg:nth-child(2) { margin-right: 11px; }
.pill svg + svg { margin-left: -4px; }
.l2 .pill svg:nth-child(2) { margin-left: -3px; margin-right: 10px; }
.v .pill svg { width: 13px; height: 13px; margin-right: 9px; }
.root { margin-left: 6px; background: #cccccc; padding-right: 4px; gap: 2px; }
.dark { background: #7c7c7c; color: #fff; margin-left: 1px; padding: 0 8px 0 0; gap: 6px; }
.dark b { margin-left: 5px; }
.edited .dark { border-left: 2px solid #f2c14e; padding-left: 3px; padding-right: 10px; margin-left: 0; }

.foot { display: flex; align-items: flex-end; gap: 188px; margin-top: auto; }
.foot .bar { flex: none; }
.navs { display: flex; gap: 5px; }
.nav { display: flex; align-items: center; gap: 5px; height: 17px; padding: 0 3px 0 2px; background: #cccccc; }
.tight { gap: 4px; padding-right: 2px; }
.nav svg { width: 14px; height: 14px; }
.nav button { display: flex; align-items: center; gap: 1px; }
.drop::after { content: ""; border: 2px solid transparent; border-top: 3px solid #222; border-bottom: 0; }

.side { position: relative; display: flex; flex-direction: column; width: 186px; padding: 0 4px 5px 0; }
.second .side { width: 184px; padding: 0 2px 0 0; }
.cube-area { display: flex; justify-content: flex-end; height: 124px; padding: 13px 11px 0 0; }
.face { font: 8px Roboto, sans-serif; fill: #6a6e76; }
.ax { font: 8px Roboto, sans-serif; }
.palette { flex: 1; display: flex; flex-direction: column; min-height: 0; background: #dcdcdc; border: 1px solid #b0b0b0; }
.second .palette { background: #d0d0d0; border-top: 0; border-bottom: 0; }
.phead { display: flex; align-items: center; flex: none; height: 17px; padding: 0 2px; background: #d0d0d0; border-bottom: 1px solid #b4b4b4; font-family: Roboto, sans-serif; color: #4a4a4a; }
.phead h2 { flex: 1; margin-left: 4px; }
.phead .grip { margin: 0 1px 0 0; }
.second .phead { height: 16px; padding-left: 3px; }
.second .phead h2 { margin-left: 8px; }
.pbody { position: relative; flex: 1; min-height: 0; overflow: hidden; }
.pbody h3 { display: flex; align-items: center; gap: 3px; height: 19px; padding-left: 2px; font-weight: 700; color: #222; }
.pbody h3::before { content: ""; border: 3px solid transparent; border-top: 5px solid #111; border-bottom: 0; }
.row { display: grid; grid-template-columns: 76px 14px; align-items: center; justify-items: start; height: 19px; padding-left: 7px; white-space: nowrap; }
.row button { justify-self: center; }
.row svg { width: 12px; height: 12px; }
.row input { appearance: none; justify-self: center; width: 10px; height: 10px; margin: 0; border: 1px solid #555; border-radius: 2px; background: linear-gradient(#c4c4c4, #f4f4f4); display: grid; place-items: center; }
.row input:checked::after { content: ""; width: 4px; height: 8px; margin-top: -2px; border: solid #111; border-width: 0 1px 1px 0; transform: rotate(40deg); }
.scroll { position: absolute; top: 0; right: 1px; bottom: 0; width: 4px; background: #b8b8b8; }
.scroll i { display: block; height: 61%; border-radius: 2px; background: #7c7c7c; }
.pfoot { display: flex; align-items: center; justify-content: flex-end; height: 27px; padding-right: 10px; background: #d0d0d0; border-top: 1px solid #b4b4b4; }
.finish { padding: 1px 2px; border: 1px solid #bbb; background: #eeeeee; font: 9px/13px "Liberation Sans", Arial, sans-serif; }

.dialog { position: absolute; top: 284px; right: 182px; width: 340px; padding-bottom: 20px; background: #f0f0f0; border: 1px solid #00cf66; box-shadow: 2px 2px 8px rgba(0, 0, 0, .35); font: 8px/12px "Noto Sans", "Open Sans", sans-serif; color: #1a1a1a; }
.dialog header { display: flex; align-items: center; justify-content: space-between; height: 22px; padding: 0 6px; background: #00cf66; color: #0a2a18; }
.dialog table { table-layout: fixed; width: 322px; margin: 8px 0 0 8px; border-collapse: separate; border-spacing: 0; border: 1px solid #999; background: #fff; }
.k0 { width: 15px; }
.k1 { width: 73px; }
.k2 { width: 78px; }
.k3 { width: 52px; }
.k4 { width: 68px; }
.k5 { width: 34px; }
.dialog th { height: 17px; padding: 0 2px; border-right: 1px solid #ddd; text-align: left; font-size: 9px; font-weight: 700; }
.dialog td { height: 15px; padding: 0 2px; border: solid #d8d8d8; border-width: 0 1px 1px 0; white-space: nowrap; line-height: 12px; }
.dialog tr:nth-child(even) td { height: 14px; }
.dialog td:first-child { border-bottom: 0; padding: 0; border-right: 0; }
.dialog td svg { display: inline-block; vertical-align: middle; }
.dialog .cat td:nth-child(n+2) { background: #d0d0d0; border-color: #bcbcbc; font-weight: 700; }
.dialog .cat td:first-child svg { display: block; }
.dialog .chev { width: 8px; height: 8px; margin: 0 0 0 3px; }
.dialog .p { padding: 0 0 0 15px; }
.dialog .star { width: 12px; height: 12px; margin-right: 4px; fill: #fff; stroke: #444; stroke-width: .8; }
```
